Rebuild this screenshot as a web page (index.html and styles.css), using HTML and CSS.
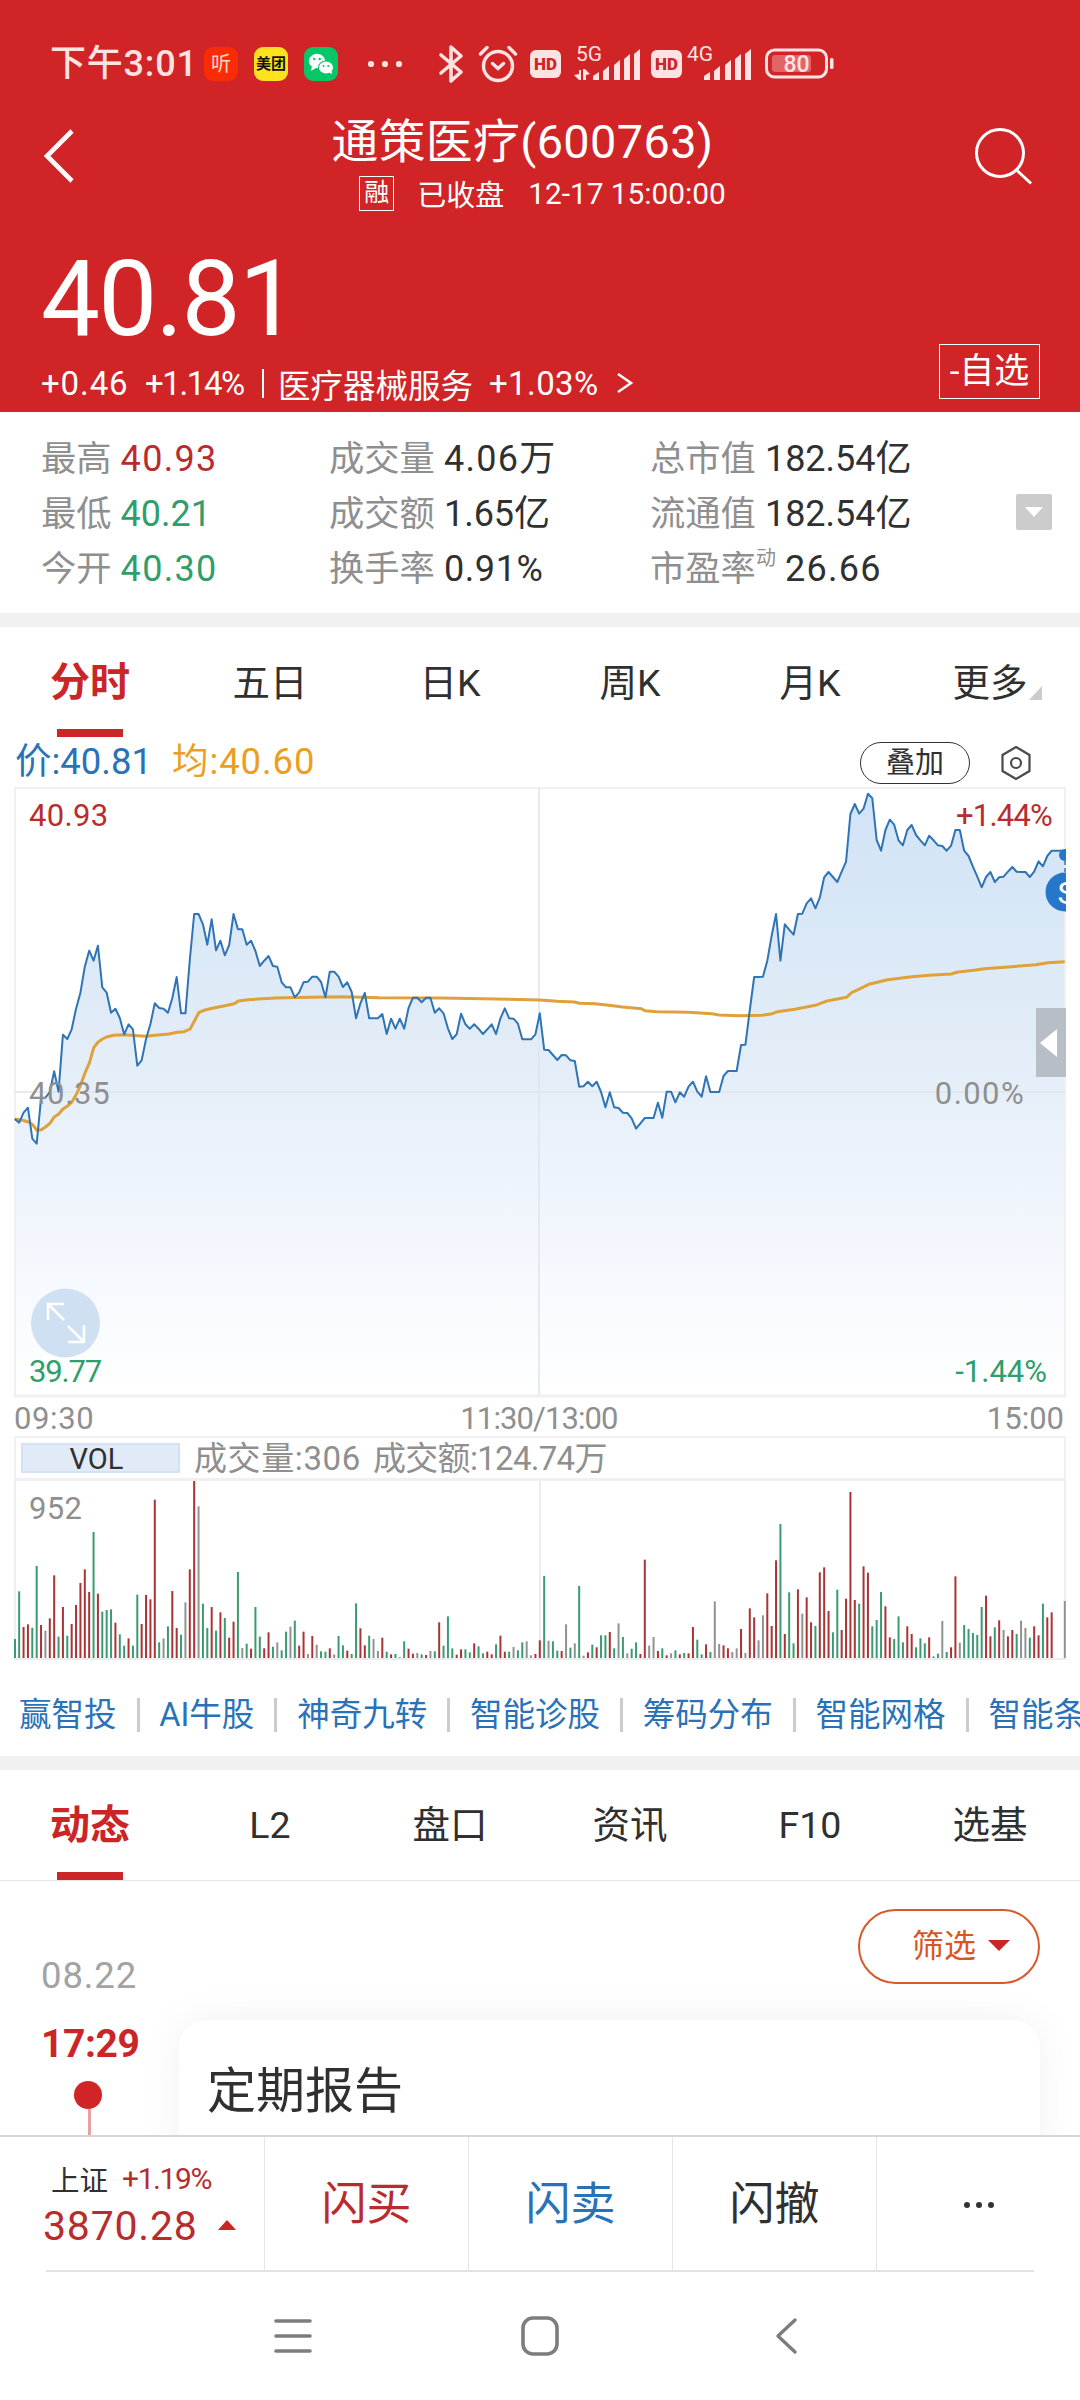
FILE: index.html
```html
<!DOCTYPE html>
<html lang="zh-CN">
<head>
<meta charset="utf-8">
<title>通策医疗(600763)</title>
<link rel="stylesheet" href="styles.css">
</head>
<body>
<header class="hero">
  <div class="status">
    <span class="clock">下午3:01</span>
    <span class="app app-listen">听</span>
    <span class="app app-meituan">美团</span>
    <span class="app app-wechat">
      <svg width="34" height="34" viewBox="0 0 34 34"><g fill="#fff"><ellipse cx="13" cy="14" rx="8.2" ry="7.2"/><path d="M8 19l-1 5 5-3z"/></g><ellipse cx="22" cy="20.5" rx="8" ry="6.9" fill="#06c668"/><g fill="#fff"><ellipse cx="22" cy="20.5" rx="7" ry="6"/><path d="M25 25l3 2.500-.5-4z"/></g><g fill="#06c668"><circle cx="10.300" cy="12" r="1.200"/><circle cx="15.700" cy="12" r="1.200"/><circle cx="19.500" cy="19" r="1"/><circle cx="24.300" cy="19" r="1"/></g></svg>
    </span>
    <svg class="i-dots" width="36" height="8" viewBox="0 0 36 8" fill="#ffe3e3"><circle cx="4" cy="4" r="3.100"/><circle cx="18" cy="4" r="3.100"/><circle cx="32" cy="4" r="3.100"/></svg>
    <svg class="i-bt" width="26" height="40" viewBox="0 0 26 40" fill="none" stroke="#ffe3e3" stroke-width="3.600" stroke-linejoin="round" stroke-linecap="round"><path d="M3 11l20 17-10 9V3l10 9L3 29"/></svg>
    <svg class="i-alarm" width="40" height="38" viewBox="0 0 40 38" fill="none" stroke="#ffe3e3" stroke-width="3.400" stroke-linecap="round"><circle cx="20" cy="21" r="14.500"/><path d="M14.500 18.500l5.500 5 5.500-5M2.500 9l6.500-6.500M37.500 9L31 2.500"/></svg>
    <span class="hd">HD</span>
    <svg class="sig5" width="67" height="42" viewBox="0 -4 67 42" fill="#ffe3e3"><text class="net" x="2" y="16">5G</text><path d="M19 35v-4l6-4v8zM29 35V26l6-5v14zM40 35V20l6-5v20zM50 35V14l6-5v26zM60 35V9l6-5v31zM0 30l5-1v-4h2v10H5zM9 24h2l5 5-4 1v5h-3z"/></svg>
    <span class="hd hd2">HD</span>
    <svg class="sig4" width="66" height="42" viewBox="0 -4 66 42" fill="#ffe3e3"><text class="net" x="1" y="16">4G</text><path d="M18 35v-4l6-4v8zM28 35V26l6-5v14zM39 35V20l6-5v20zM49 35V14l6-5v26zM59 35V9l6-5v31z"/></svg>
    <svg class="batt" width="70" height="32" viewBox="0 0 70 32"><rect x="1.500" y="2" width="60" height="27" rx="8" fill="none" stroke="#ffe3e3" stroke-width="3"/><rect x="7" y="7" width="39" height="17" rx="3" fill="#e26467"/><rect x="65" y="10" width="3.500" height="11" rx="1.500" fill="#ffe3e3"/><text class="pct" x="31.500" y="24">80</text></svg>
  </div>
  <div class="titlebar">
    <svg class="back" width="34" height="56" viewBox="0 0 34 56" fill="none" stroke="#fff" stroke-width="4.600"><path d="M30 3L5 28l25 25"/></svg>
    <div class="names">
      <h1>通策医疗(600763)</h1>
      <div class="sub"><span class="rong">融</span><span class="closed">已收盘</span><span class="stamp">12-17 15:00:00</span></div>
    </div>
    <svg class="search" width="60" height="60" viewBox="0 0 60 60" fill="none" stroke="#fff" stroke-width="3"><circle cx="26" cy="27" r="23.500"/><path d="M42.500 44l14.500 13.500"/></svg>
  </div>
  <div class="last">40.81</div>
  <div class="change"><span class="c1">+0.46</span><span class="c2">+1.14%</span><i class="bar"></i><span class="c3">医疗器械服务</span><span class="c4">+1.03%</span><svg width="18" height="24" viewBox="0 0 18 24" fill="none" stroke="#fff" stroke-width="2.600"><path d="M2 3l13 9-13 9"/></svg><button class="fav">-自选</button></div>
</header>

<section class="stats">
  <div class="col"><p><b>最高</b><span class="red wide">40.93</span></p><p><b>最低</b><span class="green">40.21</span></p><p><b>今开</b><span class="green wide">40.30</span></p></div>
  <div class="col"><p><b>成交量</b><span class="wide">4.06万</span></p><p><b>成交额</b><span>1.65亿</span></p><p><b>换手率</b><span class="mid">0.91%</span></p></div>
  <div class="col"><p><b>总市值</b><span>182.54亿</span></p><p><b>流通值</b><span>182.54亿</span></p><p><b>市盈率<sup>动</sup></b><span class="wide">26.66</span></p></div>
  <div class="drop"><svg width="18" height="10" viewBox="0 0 18 10"><path d="M0 0h18L9 10z" fill="#fff"/></svg></div>
</section>
<div class="band"></div>

<nav class="tabs tabs-chart">
  <a class="on">分时</a><a>五日</a><a>日K</a><a>周K</a><a>月K</a><a>更多<svg class="corner" width="13" height="14" viewBox="0 0 13 14"><path d="M13 0v14H0z" fill="#ccc"/></svg></a>
</nav>
<div class="legend">
  <span class="l-price">价:40.81</span><span class="l-avg">均:40.60</span>
  <button class="overlay">叠加</button>
  <svg class="hex" width="34" height="36" viewBox="0 0 34 36" fill="none" stroke="#4a4a4a" stroke-width="2.200"><path d="M17 2l13.500 8v16L17 34 3.500 26V10z"/><circle cx="17" cy="18" r="5"/></svg>
</div>

<section class="chart">
  <svg width="1052" height="611" viewBox="0 0 1052 611">
    <defs><linearGradient id="fade" gradientUnits="userSpaceOnUse" x1="0" y1="0" x2="0" y2="608"><stop offset="0" stop-color="#d0e3f6"/><stop offset=".4" stop-color="#e1ecf7"/><stop offset=".65" stop-color="#eef4fc"/><stop offset="1" stop-color="#fff"/></linearGradient></defs>
    <polygon id="area" fill="url(#fade)"/>
    <g fill="none" stroke="#f0f0f2" stroke-width="2"><path d="M1 609V1h1050v608"/><path d="M1 305h1050M525 1v607" stroke="#dfe4ea" stroke-opacity=".75"/><path d="M0 609h1052" stroke-width="3"/></g>
    <polyline id="avg" fill="none" stroke="#e0a03a" stroke-width="3" stroke-linejoin="round"/>
    <polyline id="price" fill="none" stroke="#2f74b5" stroke-width="2" stroke-linejoin="round"/>
    <path d="M1051 74v13" stroke="#2f74b5" stroke-width="1.500" stroke-dasharray="4 3"/>
    <circle cx="1051" cy="68" r="6" fill="#2676c9"/>
    <circle cx="1051" cy="105" r="19.500" fill="#2676c9"/>
    <text class="sell" x="1053" y="116.500">S</text>
    <rect x="1022" y="221" width="30" height="69" fill="#b7bec6"/>
    <path d="M1026 256l17-14v28z" fill="#fff"/>
    <circle cx="51.500" cy="536" r="34.500" fill="#cfe0f2"/>
    <path d="M50 533L34 517M34 533V517H50M54 539l16 16M70 538v17H54" fill="none" stroke="#fff" stroke-width="2.500"/>
  </svg>
  <span class="tag tl red">40.93</span><span class="tag tr red">+1.44%</span>
  <span class="tag ml">40.35</span><span class="tag mr">0.00%</span>
  <span class="tag bl green">39.77</span><span class="tag br green">-1.44%</span>
</section>
<div class="times"><span>09:30</span><span class="noon">11:30/13:00</span><span>15:00</span></div>
<div class="volhead"><span class="vol">VOL</span><span class="v1">成交量:306</span><span class="v2">成交额:124.74万</span></div>
<section class="volume">
  <svg width="1052" height="180" viewBox="0 0 1052 180">
    <g fill="none" stroke="#ededf0" stroke-width="2"><path d="M1 0v178h1050V0M526 0v178"/></g>
    <g id="bars"></g>
  </svg>
  <span class="tag vmax">952</span>
</section>

<div class="links"><a>赢智投</a><a>AI牛股</a><a>神奇九转</a><a>智能诊股</a><a>筹码分布</a><a>智能网格</a><a>智能条件单</a></div>
<div class="band"></div>
<nav class="tabs tabs-info"><a class="on">动态</a><a>L2</a><a>盘口</a><a>资讯</a><a>F10</a><a>选基</a></nav>

<section class="feed">
  <div class="when">
    <span class="date">08.22</span>
    <span class="hour">17:29</span>
    <i class="dot"></i><i class="stem"></i>
  </div>
  <div class="items">
    <button class="filter">筛选<svg width="22" height="11" viewBox="0 0 22 11"><path d="M0 0h22L11 11z" fill="#cb2528"/></svg></button>
    <article class="card">定期报告</article>
  </div>
</section>

<footer class="dock">
  <div class="index"><p class="i1"><span>上证</span><span class="red">+1.19%</span></p><p class="i2 red"><span>3870.28</span><svg width="18" height="10" viewBox="0 0 18 10"><path d="M9 0l9 10H0z" fill="#cb2528"/></svg></p></div>
  <a class="red">闪买</a><a class="blue">闪卖</a><a>闪撤</a>
  <a class="more"><svg width="32" height="8" viewBox="0 0 32 8" fill="#333"><circle cx="4" cy="4" r="3"/><circle cx="16" cy="4" r="3"/><circle cx="28" cy="4" r="3"/></svg></a>
</footer>
<div class="sysnav">
  <svg width="38" height="36" viewBox="0 0 38 36" stroke="#7d7d7d" stroke-width="3.600" stroke-linecap="round"><path d="M2 3h34M2 18h34M2 33h34"/></svg>
  <svg width="38" height="40" viewBox="0 0 38 40" fill="none" stroke="#7d7d7d" stroke-width="3.600"><rect x="2" y="2" width="34" height="36" rx="10"/></svg>
  <svg width="24" height="38" viewBox="0 0 24 38" fill="none" stroke="#7d7d7d" stroke-width="3.400" stroke-linecap="round" stroke-linejoin="round"><path d="M20 3L3 19l17 16"/></svg>
</div>
<script src="chart.js"></script>
</body>
</html>
```
FILE: styles.css
```css
* { box-sizing: border-box; margin: 0; padding: 0; }
body { width: 1080px; height: 2400px; overflow: hidden; background: #fff; color: #303030; font-family: Roboto, "Noto Sans CJK SC", sans-serif; font-weight: 400; }
button { font: inherit; background: none; border: 0; color: inherit; }
i { display: block; }
svg { display: block; flex: none; }
.red { color: #b92c2e; }
.green { color: #2f9e6b; }
.blue { color: #2a72b8; }

.hero { height: 412px; background: #d12426; color: #fff; }
.status { display: flex; align-items: center; height: 128px; padding-left: 50px; color: #ffe3e3; }
.clock { width: 154px; font-size: 36px; line-height: 48px; white-space: nowrap; letter-spacing: .8px; font-weight: 500; }
.app { display: flex; align-items: center; justify-content: center; width: 34px; height: 34px; margin-right: 16px; border-radius: 9px; overflow: hidden; line-height: 34px; white-space: nowrap; }
.app-listen { background: #f92c05; color: #ffd9d0; font-size: 20px; }
.app-meituan { background: #ffe120; color: #111; font-size: 15px; font-weight: 700; }
.app-wechat { background: #06c668; }
.i-dots { margin-left: 13px; }
.i-bt { margin-left: 35px; }
.i-alarm { margin-left: 14px; }
.hd { margin-left: 12px; width: 31px; height: 28px; border-radius: 6px; background: #ffe3e3; color: #d12426; font-size: 17px; font-weight: 900; line-height: 29px; text-align: center; }
.sig5 { margin: -4px 0 0 13px; }
.hd2 { margin-left: 10px; }
.sig4 { margin: -4px 0 0 4px; }
.net { font-size: 21px; font-weight: 400; }
.batt { margin-left: 13px; }
.pct { font-size: 23px; font-weight: 500; text-anchor: middle; fill: #ffe3e3; }

.titlebar { display: flex; justify-content: space-between; height: 92px; padding: 0 46px 0 42px; margin-top: -14px; }
.back { margin-top: 14px; }
.search { margin-top: 12px; }
.names { width: 420px; margin-left: -5px; display: flex; flex-direction: column; align-items: center; }
h1 { font-size: 46.8px; font-weight: 400; line-height: 56px; letter-spacing: .4px; white-space: nowrap; }
.sub { display: flex; align-items: center; height: 48px; margin: 2px 0 0 40px; font-size: 29px; }
.rong { width: 35px; height: 35px; border: 1.5px solid #fff; font-size: 25px; line-height: 32px; text-align: center; }
.closed { margin-left: 23px; }
.stamp { margin-left: 24px; white-space: nowrap; font-size: 29.8px; }

.last { padding-left: 41px; margin-top: 32px; height: 124px; font-size: 105px; line-height: 124px; letter-spacing: -1.7px; }
.change { display: flex; align-items: center; height: 44px; padding: 0 40px 0 41px; margin-top: -1px; font-size: 33px; white-space: nowrap; }
.change .c1 { width: 104px; letter-spacing: .9px; }
.change .c2 { width: 117px; letter-spacing: -1.4px; }
.change .bar { width: 2px; height: 29px; background: #fff; }
.change .c3 { width: 211px; margin-left: 14px; font-size: 32.5px; }
.change .c4 { width: 127px; letter-spacing: .4px; }
.fav { align-self: flex-end; width: 101px; height: 55px; margin-left: auto; border: 1.5px solid #fff; font-size: 35px; line-height: 53px; margin-bottom: 6px; }

.stats { display: flex; height: 201px; padding: 20px 28px 0 41px; }
.stats p { display: flex; height: 55px; line-height: 55px; font-size: 36px; white-space: nowrap; }
.stats .col:nth-child(1) { width: 288px; }
.stats .col:nth-child(2) { width: 321px; }
.stats b { font-weight: 400; font-size: 35.3px; color: #8f8f8f; margin-right: 9px; }
.stats sup { font-size: 20px; line-height: 0; vertical-align: 16px; }
.wide { letter-spacing: 1.3px; }
.mid { letter-spacing: .6px; }
.drop { display: flex; align-items: center; justify-content: center; width: 36px; height: 36px; margin: 62px 0 0 auto; background: #ccc; border-radius: 2px; }
.band { height: 14px; background: #f1f1f1; }

.tabs { display: flex; }
.tabs a { position: relative; display: flex; justify-content: center; width: 180px; font-size: 37.5px; }
.tabs .on { color: #cb2528; font-weight: 700; font-size: 40px; }
.tabs .on::after { content: ""; position: absolute; left: 57px; bottom: 0; width: 66px; height: 8px; background: #cb2528; }
.tabs-chart { height: 110px; line-height: 112px; }
.corner { position: absolute; right: 38px; top: 59px; }
.tabs-info { height: 111px; line-height: 111px; border-bottom: 1px solid #e4e4e4; }

.legend { display: flex; align-items: center; height: 50px; padding: 0 47px 0 15px; font-size: 36.5px; }
.legend span { line-height: 44px; }
.l-price { width: 157px; color: #2a72b8; }
.l-avg { color: #eb9f22; letter-spacing: .9px; }
.overlay { width: 110px; height: 42px; margin: 2px 29px 0 auto; border: 1.5px solid #333; border-radius: 21px; font-size: 29px; line-height: 40px; }
.hex { margin-top: 2px; }

.chart { position: relative; height: 611px; margin-left: 14px; width: 1052px; overflow: hidden; }
.tag { position: absolute; font-size: 31px; line-height: 40px; white-space: nowrap; letter-spacing: .3px; }
.tl, .ml, .bl, .vmax { left: 15px; }
.tl, .tr { top: 9px; }
.ml, .mr { top: 287px; color: #8f8f8f; }
.ml { letter-spacing: .7px; }
.bl, .br { top: 565px; }
.bl { letter-spacing: -1.2px; }
.tr { right: 14px; letter-spacing: -.8px; }
.mr { right: 41px; letter-spacing: 1.4px; }
.br { right: 19px; letter-spacing: 0; }
.sell { font-size: 32px; fill: #fff; text-anchor: middle; }

.times { display: grid; grid-template-columns: 1fr auto 1fr; height: 38px; padding: 2px 16px 0 14px; font-size: 31px; line-height: 37px; color: #8f8f8f; }
.times span:first-child { letter-spacing: .6px; }
.times span:last-child { text-align: right; }
.noon { letter-spacing: -.9px; }
.volhead { display: flex; align-items: center; height: 45px; margin: 0 14px; padding-left: 7px; border: 2px solid #f0f0f0; border-bottom-width: 3px; color: #8f8f8f; font-size: 33px; line-height: 42px; white-space: nowrap; }
.vol { width: 159px; height: 30px; margin-left: -2px; border: 2px solid #d5e1f5; background: #e1ebf8; color: #303030; font-size: 29px; line-height: 29px; text-align: center; padding-right: 8px; }
.v1, .v2 { padding-top: 2px; }
.v1 { margin-left: 14px; width: 179px; letter-spacing: .6px; }
.v2 { letter-spacing: -.7px; }
.volume { position: relative; margin-left: 14px; width: 1052px; height: 180px; }
.vmax { top: 8px; color: #8f8f8f; }

.links { display: flex; align-items: center; height: 95px; padding-left: 19px; overflow: hidden; color: #2a72b8; font-size: 32.5px; line-height: 34px; white-space: nowrap; padding-top: 13px; }
.links a { flex: none; padding-right: 20px; margin-right: 19.8px; border-right: 3px solid #ccc; }

.feed { display: flex; height: 254px; overflow: hidden; }
.when { width: 179px; padding-left: 41px; }
.when span { display: block; white-space: nowrap; }
.date { margin-top: 73px; font-size: 36.5px; line-height: 44px; color: #a3a3a3; letter-spacing: .9px; }
.hour { margin-top: 21px; font-size: 39px; font-weight: 700; line-height: 50px; color: #cb2528; letter-spacing: -.4px; }
.dot { width: 28px; height: 28px; margin: 12px 0 0 33px; border-radius: 50%; background: #d12426; }
.stem { width: 3px; height: 30px; margin-left: 47px; background: #e5a0a2; }
.items { width: 861px; }
.filter { display: flex; align-items: center; width: 182px; height: 75px; margin: 28px 0 0 auto; padding: 0 0 8px 52px; border: 2px solid #d9582a; border-radius: 38px; color: #db5423; font-size: 32px; }
.filter svg { margin-left: 12px; margin-top: 5px; }
.card { height: 160px; margin-top: 36px; padding: 42px 28px; border-radius: 27px; background: #fff; box-shadow: 0 0 44px rgba(0,0,0,.06); font-size: 49px; line-height: 60px; }

.dock { display: flex; height: 137px; border-top: 2px solid #d6d6d6; position: relative; background: #fff; }
.dock::after { content: ""; position: absolute; left: 46px; right: 46px; bottom: 0; height: 2px; background: #e2e2e2; }
.dock a { display: flex; align-items: center; justify-content: center; width: 204px; padding-top: 1px; border-left: 1.5px solid #e5e5e5; font-size: 45px; line-height: 60px; }
.dock .more { padding-top: 0; }
.index { width: 264px; padding: 20px 0 0 43px; }
.index p { display: flex; align-items: center; }
.i1 { height: 42px; font-size: 28.5px; padding-left: 8px; gap: 14px; }
.i1 span:last-child { font-size: 30px; letter-spacing: -1.4px; }
.i2 { height: 54px; font-size: 41px; letter-spacing: .8px; }
.i2 svg { margin: -2px 0 0 20px; }
.sysnav { display: flex; align-items: center; height: 127px; padding-left: 274px; }
.sysnav svg:nth-child(2) { margin-left: 209px; }
.sysnav svg:nth-child(3) { margin-left: 216px; }
```
FILE: chart.js
```js
// One value per trading minute, measured downwards from the chart's top in thirds of a pixel.
const price = [1017,1028,998,983,1076,1091,955,953,936,874,935,764,777,748,686,638,560,512,542,497,622,638,698,686,714,763,733,748,857,841,777,732,670,684,686,698,655,591,700,700,540,402,402,433,494,418,511,482,526,495,402,448,448,494,482,513,558,542,528,558,560,607,622,622,652,637,607,605,590,590,606,652,575,575,590,621,607,636,715,670,639,715,715,715,702,762,716,746,716,746,684,653,653,667,653,653,698,685,700,745,777,763,701,733,746,733,746,762,748,733,762,715,685,715,716,731,778,778,778,763,
700,809,810,825,840,825,826,841,843,920,919,905,919,905,936,982,937,982,984,998,999,1015,1046,1030,1014,1014,1014,968,1013,935,935,967,937,950,920,905,935,950,889,936,936,936,888,873,873,873,795,794,690,591,591,590,542,467,402,542,433,449,464,402,401,370,355,385,353,292,276,291,306,275,245,102,72,101,86,41,55,180,212,150,119,134,181,196,150,135,165,181,196,167,181,196,198,212,197,150,150,212,228,260,290,322,291,276,306,292,290,275,261,275,276,276,291,275,244,259,228,212,212,212,212];
const avg = [43,1017,65,1021,85,1027,95,1034,107,1051,120,1049,132,1041,145,1030,158,1010,170,1003,183,987,196,978,208,967,221,945,234,915,247,878,260,848,272,803,285,786,298,777,312,770,330,766,360,764,400,767,425,769,450,766,490,762,515,757,535,755,552,747,565,722,578,697,595,690,620,684,650,678,680,671,692,663,720,659,800,654,900,652,1000,650,1100,653,1280,654,1400,656,1568,660,1618,664,1668,666,1683,670,1728,671,1768,676,1808,681,1863,686,1873,692,1908,695,1998,697,2068,701,2088,705,2148,707,2213,706,2243,701,2258,695,2308,688,2368,676,2398,664,2458,652,2473,638,2498,626,2523,613,2578,599,2648,590,2698,586,2763,582,2778,577,2833,570,2858,566,2928,561,3008,554,3043,548,3092,545];
// Bar tops, with r = up, g = down, n = unchanged.
const volume = "507g 364g 471r 463r 473g 288g 465r 482n 445r 316r 500g 411r 497g 462r 405r 339r 298r 366r 186g 371r 425g 420g 418g 458r 493g 527g 505r 527g 374g 462r 375r 388r 89r 517g 505n 469g 363r 474r 494g 397n 298r 33r 109n 401g 474g 411r 482g 427r 444g 503r 455r 306g 534n 521g 536r 411g 500g 535r 487r 530g 517n 541g 485g 470n 452g 527r 485r 552n 498r 524n 544g 545g 535r 553n 498g 526g 542r 552g 400g 475r 526r 497g 507n 543n 503r 545g 553r 552g 561n 514g 536r 551r 549n 553g 555r 543n 544g 457r 527g 439g 535g 554r 538r 538g 547g 520r 529g 550g 545r 553r 523g 497r 545r 545g 531n 541g 517g 514n 556n 552r 511r 318g 512n 514g 542g 543r 463n 533g 520n 348g 557n 547r 524g 532r 496g 496g 486r 535g 460n 501g 550n 536g 517g 552r 269r 527n 501n 543r 535g 556r 550n 541g 553r 549g 550r 471r 509g 553g 523r 546g 394n 522n 526r 535r 546n 535n 477r 549n 415r 442r 511n 436n 370r 468r 271r 162g 492r 367g 520g 358r 431n 382r 457r 468g 307r 292r 423r 487g 359g 480r 386r 66r 390r 401g 289r 308r 469g 450g 366g 409r 502r 507g 439g 517g 469r 492r 532g 505g 520g 502r 559g 551g 453n 546g 532r 319r 518n 465g 477g 489g 495g 411g 377r 499r 472g 451r 480n 499r 480r 492g 452n 474n 503g 469r 496r 401g 442r 427r 564n 564n 393n".split(" ");
const colors = { r: "#ab3335", g: "#3a9b72", n: "#929292" };
const x = i => (0.8 + i * 4.375).toFixed(2);

const line = price.map((v, i) => x(i) + "," + (v / 3 - 7).toFixed(1));
document.getElementById("price").setAttribute("points", line.join(" "));
document.getElementById("area").setAttribute("points", "0.8,608 " + line.join(" ") + " 1051,608");

const mean = [];
for (let i = 0; i < avg.length; i += 2) mean.push((avg[i] / 2.904 - 14).toFixed(1) + "," + (avg[i + 1] / 3 - 7).toFixed(1));
document.getElementById("avg").setAttribute("points", mean.join(" "));

const bars = document.getElementById("bars");
volume.forEach((item, i) => {
  const h = (564 - parseInt(item, 10)) / 3;
  if (h <= 0) return;
  const r = document.createElementNS("http://www.w3.org/2000/svg", "rect");
  r.setAttribute("x", Math.max(0, x(i) - 1));
  r.setAttribute("y", 177 - h);
  r.setAttribute("width", 2);
  r.setAttribute("height", h);
  r.setAttribute("fill", colors[item.slice(-1)]);
  bars.appendChild(r);
});
```
